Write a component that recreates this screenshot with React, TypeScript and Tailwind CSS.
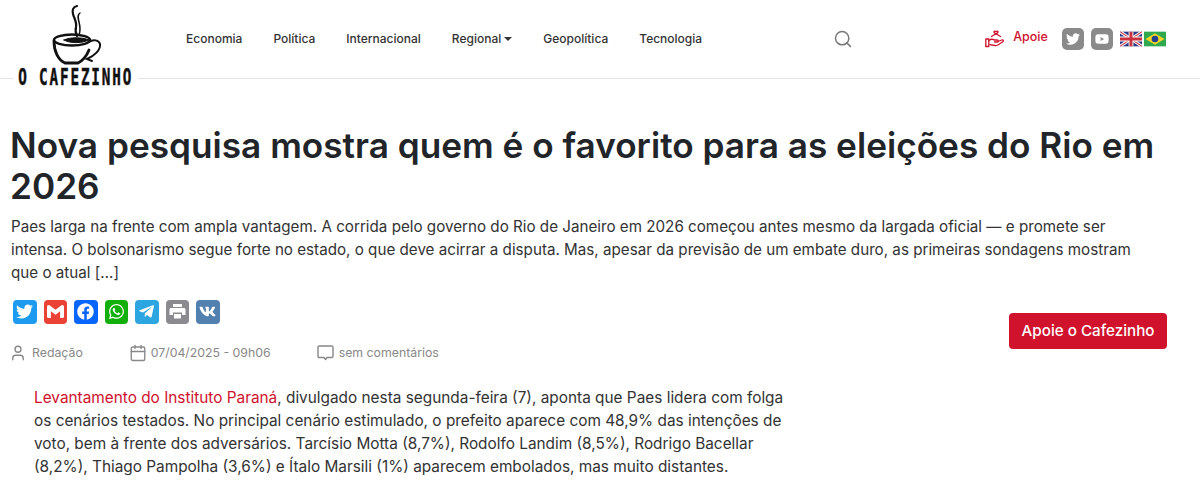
import { FaTwitter, FaFacebook, FaWhatsapp, FaTelegramPlane, FaVk, FaYoutube } from 'react-icons/fa';
import { SiGmail } from 'react-icons/si';
import { Search, User, Calendar } from 'lucide-react';

const navItems = ['Economia', 'Política', 'Internacional', 'Regional', 'Geopolítica', 'Tecnologia'];

function PrinterIcon() {
  return (
    <svg width="19" height="19" viewBox="0 0 19 19" fill="#fff">
      <path d="M5 2h9v3H5z" />
      <path d="M3 6h13c.8 0 1.500.7 1.500 1.500V13H14v-2.500H5V13H1.500V7.500C1.500 6.700 2.200 6 3 6z" />
      <path d="M6 12h7v4.500H6z" />
    </svg>
  );
}

const shareIcons = [
  { icon: <FaTwitter />, color: 'bg-[#1d9bf0]' },
  { icon: <SiGmail />, color: 'bg-[#ea4335]' },
  { icon: <FaFacebook />, color: 'bg-[#0866ff]' },
  { icon: <FaWhatsapp />, color: 'bg-[#12af0a]' },
  { icon: <FaTelegramPlane />, color: 'bg-[#2ca5e0]' },
  { icon: <PrinterIcon />, color: 'bg-[#8a8a8f]' },
  { icon: <FaVk />, color: 'bg-[#5281b0]' },
];

function CupLogo() {
  return (
    <svg width="50" height="62" viewBox="0 0 50 62" fill="none" stroke="#111" strokeLinecap="round">
      <path d="M25 2c-4 1-5 4-4 8s4 8 3 13c-1 4 0 7 1 9" strokeWidth="2.2" />
      <path d="M28 9c-3 2-2 5-1 9s2 8 0 13" strokeWidth="1.5" />
      <ellipse cx="20" cy="36" rx="18" ry="5.5" strokeWidth="2.5" />
      <path d="M12 36c6-3 18-3 25 0-6 3-18 4-25 0z" fill="#111" strokeWidth="1" />
      <path d="M2 37c0 10 4 19 11 22h13c6-3 9-8 11-13" strokeWidth="2.8" />
      <path d="M37 38c4-3 10-2 11 2 1 6-6 12-13 15l5 2" strokeWidth="2" />
    </svg>
  );
}

function HandGift() {
  return (
    <svg width="20" height="20" viewBox="0 0 20 20" fill="none" stroke="#d0122d" strokeWidth="1.3" strokeLinejoin="round" strokeLinecap="round">
      <path d="M11 5.2 9.2 3.6c-.8-.9.5-2 1.8-.9 1.3-1.100 2.600 0 1.800.9z" />
      <path d="M6.500 7.500 11 4.800l4.500 2.700" />
      <rect x="0.800" y="10" width="3" height="7.500" />
      <path d="M3.800 11.500c2-1.500 4-1.500 5.500-.5h3c1.200 0 1.200 2 0 2H9.500" />
      <path d="M12.800 12.500l4-1.500c1.500-.5 2.200 1 1 1.800l-5 3.200c-1 .5-2 .7-3 .5l-5-.8" />
    </svg>
  );
}

function CommentIcon() {
  return (
    <svg width="17" height="16" viewBox="0 0 17 16" fill="none" stroke="currentColor" strokeWidth="1.4" strokeLinejoin="round">
      <path d="M2.200 1h12.600c.7 0 1.200.5 1.200 1.200v9.100c0 .7-.5 1.200-1.200 1.200H10l-1.500 2-1.500-2H2.200c-.7 0-1.200-.5-1.200-1.200V2.200C1 1.500 1.500 1 2.200 1z" />
    </svg>
  );
}

function UkFlag() {
  return (
    <svg width="22" height="16" viewBox="0 0 60 40">
      <rect width="60" height="40" fill="#2b3a86" />
      <path d="M0 0l60 40M60 0L0 40" stroke="#fff" strokeWidth="8" />
      <path d="M0 0l60 40M60 0L0 40" stroke="#c8323e" strokeWidth="3" />
      <path d="M30 0v40M0 20h60" stroke="#fff" strokeWidth="13" />
      <path d="M30 0v40M0 20h60" stroke="#c8323e" strokeWidth="8" />
    </svg>
  );
}

function BrFlag() {
  return (
    <svg width="22" height="16" viewBox="0 0 60 40">
      <rect width="60" height="40" fill="#2fa84f" />
      <path d="M30 4l26 16-26 16L4 20z" fill="#f5d327" />
      <circle cx="30" cy="20" r="9" fill="#23408f" />
    </svg>
  );
}

export default function App() {
  return (
    <div className="h-[483px] overflow-hidden bg-white font-['Inter',sans-serif] text-[#212529]">
      <header className="relative h-[79px] border-b border-[#e5e5e5] flex items-start">
        {/* logo sits over the header line */}
        <div className="absolute left-[13px] top-[4px] w-[125px] flex flex-col items-center">
          <div className="ml-[3px]"><CupLogo /></div>
          <div className="w-full h-[22px] bg-white flex justify-center overflow-visible">
            <span className="text-[23px] leading-[22px] font-bold tracking-[3px] text-[#111] font-['DejaVu_Sans_Mono',monospace] whitespace-nowrap scale-x-[0.62] [-webkit-text-stroke:0.5px_#111]">
              O CAFEZINHO
            </span>
          </div>
        </div>
        <nav className="ml-[186px] mt-[31px] flex gap-[31px] text-[12px] leading-[16px] font-medium text-[#333]">
          {navItems.map(item => (
            <span key={item} className="flex items-center gap-[3px]">
              {item}
              {item === 'Regional' && <span className="border-x-[4px] border-t-[4px] border-x-transparent border-t-[#333]" />}
            </span>
          ))}
        </nav>
        <Search className="ml-[131px] mt-[29px] text-[#777]" size={20} strokeWidth={1.8} />
        <div className="ml-[132px] mt-[28px] flex items-center">
          <HandGift />
          <span className="ml-[8px] text-[12.5px] font-medium text-[#d0122d] -mt-[3px]">Apoie</span>
          <span className="ml-[14px] w-[22px] h-[22px] rounded-[5px] bg-[#8a8a8a] flex items-center justify-center text-white text-[14px]"><FaTwitter /></span>
          <span className="ml-[7px] w-[22px] h-[22px] rounded-[5px] bg-[#8a8a8a] flex items-center justify-center text-white text-[14px]"><FaYoutube /></span>
          <span className="ml-[7px]"><UkFlag /></span>
          <span className="ml-[2px]"><BrFlag /></span>
        </div>
      </header>

      <main className="px-[11px] pt-[46px]">
        <h1 className="-ml-[1px] text-[35.2px] leading-[41px] font-semibold">
          Nova pesquisa mostra quem é o favorito para as eleições do Rio em 2026
        </h1>
        <p className="mt-[8px] text-[15.2px] leading-[23px] text-[#333] max-w-[1150px]">
          Paes larga na frente com ampla vantagem. A corrida pelo governo do Rio de Janeiro em 2026 começou antes mesmo da largada oficial — e promete ser intensa. O bolsonarismo segue forte no estado, o que deve acirrar a disputa. Mas, apesar da previsão de um embate duro, as primeiras sondagens mostram que o atual […]
        </p>

        <div className="mt-[16px] flex justify-between">
          <div>
            <div className="ml-[2px] flex gap-[7px]">
              {shareIcons.map((s, i) => (
                <span key={i} className={`w-[23.5px] h-[23.5px] rounded-[4px] ${s.color} flex items-center justify-center text-white text-[17px]`}>
                  {s.icon}
                </span>
              ))}
            </div>
            <div className="mt-[20px] flex items-center text-[12.3px] leading-[16px] text-[#888]">
              <User size={18} strokeWidth={1.8} className="-ml-[2px]" />
              <span className="ml-[5px]">Redação</span>
              <Calendar className="ml-[46px]" size={18} strokeWidth={1.8} />
              <span className="ml-[4px]">07/04/2025 - 09h06</span>
              <span className="ml-[46px]"><CommentIcon /></span>
              <span className="ml-[5px]">sem comentários</span>
            </div>
          </div>
          <button className="mt-[13px] mr-[22px] w-[158px] h-[36px] rounded-[4px] bg-[#d0122d] text-white text-[15.2px] font-medium">
            Apoie o Cafezinho
          </button>
        </div>

        <p className="mt-[24px] ml-[23px] w-[755px] text-[15.36px] leading-[23px] text-[#333]">
          <span className="text-[#d0122d]">Levantamento do Instituto Paraná</span>, divulgado nesta segunda-feira (7), aponta que Paes lidera com folga os cenários testados. No principal cenário estimulado, o prefeito aparece com 48,9% das intenções de voto, bem à frente dos adversários. Tarcísio Motta (8,7%), Rodolfo Landim (8,5%), Rodrigo Bacellar (8,2%), Thiago Pampolha (3,6%) e Ítalo Marsili (1%) aparecem embolados, mas muito distantes.
        </p>
      </main>
    </div>
  );
}
